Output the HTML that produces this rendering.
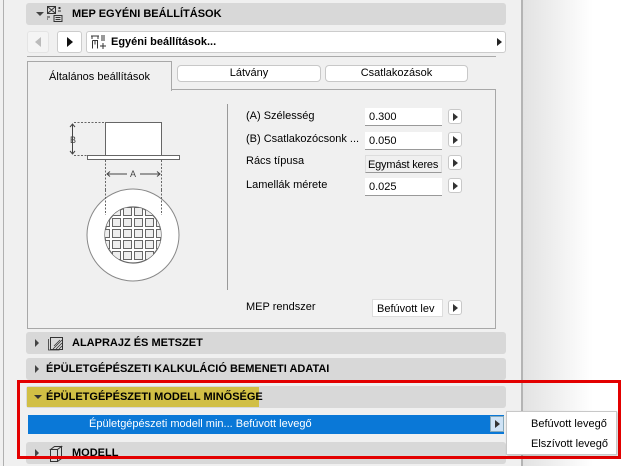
<!DOCTYPE html>
<html><head><meta charset="utf-8"><style>
*{margin:0;padding:0;box-sizing:border-box}
body{width:626px;height:466px;overflow:hidden;background:#fff;font-family:"Liberation Sans",sans-serif;font-size:11px;color:#000;position:relative}
.a{position:absolute}
.hdr{position:absolute;left:26px;width:480px;background:#d8d8d8;border-radius:3px;font-weight:bold;font-size:11px;line-height:20px}
.tri{position:absolute;width:0;height:0}
.fld{position:absolute;left:365px;width:77px;height:18px;background:#fff;border-bottom:1px solid #999;font-size:11px;padding-left:4px;line-height:18px;white-space:nowrap;overflow:hidden}
.arr{position:absolute;left:448px;width:14px;height:15px;background:#fff;border:1px solid #c8c8c8;border-radius:3px}
.arr:after{content:"";position:absolute;left:4px;top:3px;border-left:5px solid #333;border-top:4px solid transparent;border-bottom:4px solid transparent}
.lbl{position:absolute;left:246px;font-size:11px}
</style></head><body>
<div class="a" style="left:0;top:0;width:522px;height:466px;background:#f0f0f0"></div>
<div class="a" style="left:3px;top:0;width:1px;height:466px;background:#b0b0b0"></div>
<div class="a" style="left:521px;top:0;width:2px;height:466px;background:#b4b4b4"></div>
<div class="a" style="left:523px;top:0;width:70px;height:466px;background:linear-gradient(to right,#e2e2e2,#fff)"></div>

<div class="hdr" style="top:3px;height:22px;line-height:22px">
<div class="tri" style="left:10px;top:9px;border-top:4px solid #444;border-left:4px solid transparent;border-right:4px solid transparent"></div>
<svg class="a" style="left:21px;top:3px" width="16" height="16" viewBox="0 0 16 16" fill="none" stroke="#333" stroke-width="1"><rect x="0.5" y="0.5" width="8" height="7"/><path d="M1 1l7 6M8 1l-7 6M11 2h3M12.5 1v2M11 5h3M0 11h3M0 13h1M7 9.5h8v6h-8zM8.5 11.5h5M8.5 13.5h5"/></svg>
<span class="a" style="left:46px;top:0">MEP EGYÉNI BEÁLLÍTÁSOK</span></div>

<div class="a" style="left:27px;top:31px;width:22px;height:22px;background:#f4f4f4;border:1px solid #e4e4e4;border-radius:3px"><div class="tri" style="left:7px;top:5px;border-right:6px solid #bbb;border-top:5px solid transparent;border-bottom:5px solid transparent"></div></div>
<div class="a" style="left:57px;top:31px;width:25px;height:22px;background:#fff;border:1px solid #ccc;border-radius:3px"><div class="tri" style="left:9px;top:5px;border-left:6px solid #111;border-top:5px solid transparent;border-bottom:5px solid transparent"></div></div>
<div class="a" style="left:86px;top:31px;width:420px;height:22px;background:#fff;border:1px solid #ccc;border-radius:3px;font-weight:bold;line-height:20px">
<svg class="a" style="left:3px;top:3px" width="16" height="15" viewBox="0 0 16 15" fill="none" stroke="#333"><path d="M1 1h8M2 1v3M8 1v3M2.5 5.5h5v8M2.5 5.5v8M5 5.5v4M11 1h4M11 3h4M11 5h4M13 8v6M10 11h6"/></svg>
<span class="a" style="left:24px;top:0">Egyéni beállítások...</span>
<div class="tri" style="left:410px;top:6px;border-left:5px solid #222;border-top:4px solid transparent;border-bottom:4px solid transparent"></div></div>
<div class="a" style="left:27px;top:56px;width:469px;height:1px;background:#aaa"></div>

<div class="a" style="left:27px;top:89px;width:469px;height:240px;border:1px solid #a8a8a8"></div>
<div class="a" style="left:27px;top:61px;width:145px;height:30px;background:#f0f0f0;border:1px solid #a8a8a8;border-bottom:none;text-align:center;line-height:30px">Általános beállítások</div>
<div class="a" style="left:177px;top:65px;width:144px;height:17px;background:#fff;border:1px solid #c8c8c8;border-radius:4px;text-align:center;line-height:15px">Látvány</div>
<div class="a" style="left:325px;top:65px;width:143px;height:17px;background:#fff;border:1px solid #c8c8c8;border-radius:4px;text-align:center;line-height:15px">Csatlakozások</div>

<svg class="a" style="left:60px;top:110px" width="140" height="175" viewBox="0 0 140 175" fill="none" stroke="#666">
<rect x="45.5" y="12.5" width="56" height="33" fill="#fff"/>
<rect x="27.5" y="45.5" width="92" height="4" fill="#fff"/>
<path d="M14 12.5h31M14 45.5h13M45.5 50v30M101.5 50v30" stroke-dasharray="2,1.5"/>
<path d="M12.5 14v30M10 17l2.5-3 2.5 3M10 41l2.5 3 2.5-3M47 64h20M80 64h20M50 61.5l-3 2.5 3 2.5M97 61.5l3 2.5-3 2.5" stroke="#444"/>
<text x="10" y="33" font-size="9" fill="#444" stroke="none" font-family="Liberation Sans">B</text>
<text x="70" y="67" font-size="9" fill="#444" stroke="none" font-family="Liberation Sans">A</text>
<circle cx="73" cy="125" r="46" fill="#fff" stroke="#888"/>
<clipPath id="c"><circle cx="73" cy="125" r="28"/></clipPath>
<circle cx="73" cy="125" r="28" fill="#fff" stroke="#666" stroke-width="1.2"/>
<g clip-path="url(#c)" stroke="#666" fill="#eee">
<g id="r"><rect x="41.5" y="97.5" width="8" height="8"/><rect x="52.5" y="97.5" width="8" height="8"/><rect x="63.5" y="97.5" width="8" height="8"/><rect x="74.5" y="97.5" width="8" height="8"/><rect x="85.5" y="97.5" width="8" height="8"/><rect x="96.5" y="97.5" width="8" height="8"/></g>
<use href="#r" y="11"/><use href="#r" y="22"/><use href="#r" y="33"/><use href="#r" y="44"/>
</g>
<path d="M45.5 80v25M101.5 80v25" stroke-dasharray="2,1.5"/>
</svg>
<div class="a" style="left:227px;top:104px;width:1px;height:186px;background:#999"></div>

<div class="lbl" style="top:110px">(A) Szélesség</div>
<div class="fld" style="top:108px">0.300</div><div class="arr" style="top:109px"></div>
<div class="lbl" style="top:133px">(B) Csatlakozócsonk ...</div>
<div class="fld" style="top:132px">0.050</div><div class="arr" style="top:132px"></div>
<div class="lbl" style="top:155px">Rács típusa</div>
<div class="fld" style="top:155px;background:#f0f0f0;border:1px solid #ddd;border-bottom:1px solid #999;padding-left:2px;letter-spacing:-0.2px">Egymást keres</div><div class="arr" style="top:155px"></div>
<div class="lbl" style="top:179px">Lamellák mérete</div>
<div class="fld" style="top:178px">0.025</div><div class="arr" style="top:178px"></div>
<div class="lbl" style="top:301px">MEP rendszer</div>
<div class="fld" style="top:299px;left:372px;width:71px;background:#fff;border:1px solid #ddd">Befúvott lev</div><div class="arr" style="top:300px"></div>

<div class="hdr" style="top:332px;height:22px;line-height:22px">
<div class="tri" style="left:9px;top:7px;border-left:4px solid #444;border-top:4px solid transparent;border-bottom:4px solid transparent"></div>
<svg class="a" style="left:22px;top:3px" width="16" height="16" viewBox="0 0 16 16" fill="none" stroke="#333"><path d="M2.5 2.5h12v12h-12z"/><path d="M5 14l9-9M8 14l6-6M11 14l3-3M6 11l6-6" stroke-width=".8"/><path d="M0.5 4v11h11" stroke-width=".8"/></svg>
<span class="a" style="left:46px;top:0">ALAPRAJZ ÉS METSZET</span></div>
<div class="hdr" style="top:358px;height:22px;line-height:22px">
<div class="tri" style="left:9px;top:7px;border-left:4px solid #444;border-top:4px solid transparent;border-bottom:4px solid transparent"></div>
<span class="a" style="left:20px;top:0">ÉPÜLETGÉPÉSZETI KALKULÁCIÓ BEMENETI ADATAI</span></div>
<div class="hdr" style="top:386px;height:22px;line-height:22px">
<div class="a" style="left:1px;top:1px;width:232px;height:20px;background:#d1bf45"></div>
<div class="tri" style="left:8px;top:9px;border-top:4px solid #333;border-left:4px solid transparent;border-right:4px solid transparent"></div>
<span class="a" style="left:20px;top:0">ÉPÜLETGÉPÉSZETI MODELL MINŐSÉGE</span></div>
<div class="a" style="left:28px;top:415px;width:476px;height:19px;background:#0a78d7;color:#fff;line-height:18px">
<span class="a" style="left:61px;top:0">Épületgépészeti modell min... Befúvott levegő</span>
<div class="a" style="left:462px;top:1px;width:14px;height:16px;background:#cfe3f6;border:1px solid #8ab"><div class="tri" style="left:4px;top:3px;border-left:5px solid #333;border-top:4px solid transparent;border-bottom:4px solid transparent"></div></div></div>
<div class="hdr" style="top:442px;height:22px;line-height:22px">
<div class="tri" style="left:9px;top:7px;border-left:4px solid #444;border-top:4px solid transparent;border-bottom:4px solid transparent"></div>
<svg class="a" style="left:22px;top:3px" width="16" height="18" viewBox="0 0 16 18" fill="none" stroke="#333"><path d="M2.5 4.5l4-3h7l-4 3zM2.5 4.5h7v12h-7zM9.5 4.5l4-3v12l-4 3"/></svg>
<span class="a" style="left:46px;top:0">MODELL</span></div>

<div class="a" style="left:17px;top:380px;width:604px;height:79px;border:3px solid #e30000"></div>
<div class="a" style="left:506px;top:411px;width:111px;height:44px;background:#fff;border:1px solid #c8c8c8;box-shadow:1px 1px 2px rgba(0,0,0,.2)">
<div class="a" style="left:24px;top:6px">Befúvott levegő</div>
<div class="a" style="left:24px;top:26px">Elszívott levegő</div></div>
</body></html>
